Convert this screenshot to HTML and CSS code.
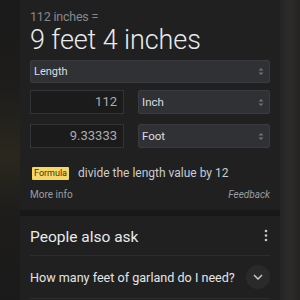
FILE: index.html
```html
<!DOCTYPE html>
<html>
<head>
<meta charset="utf-8">
<link rel="stylesheet" href="styles.css">
</head>
<body>
<div class="screen">
  <div class="edge-left"></div>
  <div class="content">
    <div class="card converter">
      <div class="subtitle">112 inches =</div>
      <div class="result">9 feet 4 inches</div>
      <div class="select wide"><span>Length</span><svg class="updown" width="6" height="9" viewBox="0 0 6 9"><path d="M0.5 3.5 L3 1 L5.5 3.5 Z M0.5 5.5 L3 8 L5.5 5.5 Z" fill="#6f7378"/></svg></div>
      <div class="row">
        <div class="input">112</div>
        <div class="select"><span>Inch</span><svg class="updown" width="6" height="9" viewBox="0 0 6 9"><path d="M0.5 3.5 L3 1 L5.5 3.5 Z M0.5 5.5 L3 8 L5.5 5.5 Z" fill="#6f7378"/></svg></div>
      </div>
      <div class="row">
        <div class="input">9.33333</div>
        <div class="select"><span>Foot</span><svg class="updown" width="6" height="9" viewBox="0 0 6 9"><path d="M0.5 3.5 L3 1 L5.5 3.5 Z M0.5 5.5 L3 8 L5.5 5.5 Z" fill="#6f7378"/></svg></div>
      </div>
      <div class="formula"><span class="badge">Formula</span><span class="ftext">divide the length value by 12</span></div>
      <div class="links"><span class="more">More info</span><span class="feedback">Feedback</span></div>
    </div>
    <div class="band"></div>
    <div class="card paa">
      <div class="paa-head"><span class="paa-title">People also ask</span><svg width="4" height="13" viewBox="0 0 4 13"><circle cx="2" cy="2" r="1.3" fill="#c4c7cb"/><circle cx="2" cy="6.5" r="1.3" fill="#c4c7cb"/><circle cx="2" cy="11" r="1.3" fill="#c4c7cb"/></svg></div>
      <div class="question"><span>How many feet of garland do I need?</span><span class="chev"><svg width="10" height="6" viewBox="0 0 10 6"><path d="M1 1 L5 5 L9 1" fill="none" stroke="#c4c7cb" stroke-width="1.5"/></svg></span></div>
    </div>
  </div>
  <div class="edge-right"></div>
</div>
</body>
</html>
```
FILE: styles.css
```css
html, body {
  margin: 0;
  padding: 0;
  width: 300px;
  height: 300px;
  overflow: hidden;
  background: #1c1c1c;
  font-family: Roboto, "Liberation Sans", sans-serif;
}
.screen {
  display: flex;
  height: 300px;
}
.edge-left {
  width: 20px;
  background: linear-gradient(180deg, #1a1a1a 0%, #1e1d1b 30%, #2a271e 52%, #1e1d1b 70%, #1a1a1a 100%);
}
.edge-right {
  width: 20px;
  background: linear-gradient(90deg, #242424 0%, #2d2c2b 50%, #242322 100%);
}
.content {
  width: 260px;
  display: flex;
  flex-direction: column;
  background: #202020;
}
.card {
  padding: 0 10px;
}
.converter {
  padding-top: 9px;
  height: 210px;
  box-sizing: border-box;
}
.subtitle {
  font-size: 12.5px;
  line-height: 16px;
  color: #85888c;
  letter-spacing: -0.2px;
}
.result {
  font-size: 27px;
  font-weight: 300;
  line-height: 30px;
  color: #e8eaed;
  letter-spacing: -0.1px;
}
.select {
  height: 22px;
  background: #303134;
  border: 1px solid #3a3b3e;
  box-sizing: border-box;
  border-radius: 2px;
  display: flex;
  align-items: center;
  justify-content: space-between;
  padding: 0 5px 0 3px;
  color: #dcdee1;
  font-size: 11.5px;
  flex: 1;
}
.select.wide {
  margin-top: 5px;
  height: 23px;
  font-size: 11px;
}
.row {
  display: flex;
  gap: 14px;
  margin-top: 7px;
  height: 24px;
}
.row + .row {
  margin-top: 10px;
}
.row .select {
  height: 24px;
}
.input {
  width: 94px;
  flex: none;
  box-sizing: border-box;
  border: 1px solid #333437;
  background: #1b1b1b;
  color: #a9acb0;
  font-size: 13px;
  text-align: right;
  padding-right: 6px;
  line-height: 22px;
}
.formula {
  display: flex;
  align-items: center;
  margin-top: 18px;
  padding-left: 2px;
}
.badge {
  background: #f7d866;
  color: #3b3210;
  font-size: 9px;
  line-height: 13px;
  padding: 0 2px;
  border-radius: 1px;
}
.ftext {
  margin-left: 9px;
  font-size: 12px;
  color: #c9ccd0;
}
.links {
  display: flex;
  justify-content: space-between;
  margin-top: 9px;
  font-size: 10px;
  color: #9a9da1;
}
.feedback {
  font-style: italic;
}
.band {
  height: 6px;
  background: #181818;
}
.paa {
  padding-top: 11px;
}
.paa-head {
  display: flex;
  justify-content: space-between;
  align-items: center;
  height: 29px;
  border-bottom: 1px solid #2c2c2c;
  padding-bottom: 1px;
  padding-right: 2px;
  box-sizing: border-box;
}
.paa-title {
  font-size: 15.5px;
  color: #e8eaed;
  margin-top: -8px;
}
.paa-head svg {
  margin-top: -10px;
}
.question {
  display: flex;
  justify-content: space-between;
  align-items: center;
  height: 42px;
  border-bottom: 1px solid #2c2c2c;
  font-size: 12.6px;
  color: #e3e5e8;
}
.chev {
  width: 24px;
  height: 24px;
  border-radius: 50%;
  background: #2a2a2a;
  display: flex;
  align-items: center;
  justify-content: center;
}
```
